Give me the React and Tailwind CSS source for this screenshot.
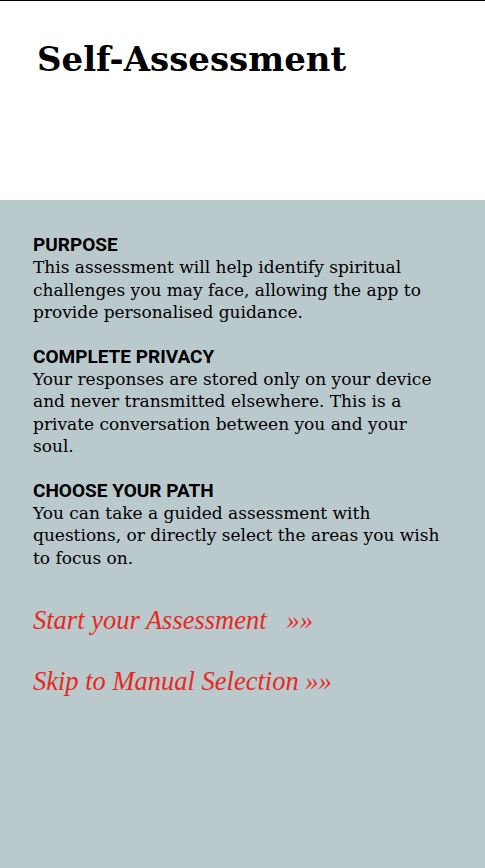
export default function App() {
  return (
    <div className="min-h-[868px] w-full flex flex-col bg-[#bac9cc] border-t border-black">
      <header className="h-[199px] bg-white px-[37px] pt-[34px]">
        <h1 className="text-[34px] font-bold leading-[48px] text-black [font-family:'DejaVu_Serif',serif]">
          Self-Assessment
        </h1>
      </header>
      <main className="px-[33px] pt-[34px] flex flex-col gap-[22px] text-black">
        <section>
          <h2 className="text-[19px] font-bold leading-[22px] [font-family:Roboto,sans-serif]">PURPOSE</h2>
          <p className="text-[17px] leading-[22.5px] [font-family:'DejaVu_Serif',serif]">
            This assessment will help identify spiritual challenges you may face, allowing the app to provide
            personalised guidance.
          </p>
        </section>
        <section>
          <h2 className="text-[19px] font-bold leading-[22px] [font-family:Roboto,sans-serif]">COMPLETE PRIVACY</h2>
          <p className="text-[17px] leading-[22.5px] [font-family:'DejaVu_Serif',serif]">
            Your responses are stored only on your device and never transmitted elsewhere. This is a private
            conversation between you and your soul.
          </p>
        </section>
        <section>
          <h2 className="text-[19px] font-bold leading-[22px] [font-family:Roboto,sans-serif]">CHOOSE YOUR PATH</h2>
          <p className="text-[17px] leading-[22.5px] [font-family:'DejaVu_Serif',serif]">
            You can take a guided assessment with questions, or directly select the areas you wish to focus on.
          </p>
        </section>
        <div className="flex flex-col gap-[30px] pt-[14px] text-[26.5px] italic leading-[31px] text-[#e8281e] [font-family:'Liberation_Serif',serif]">
          <a href="#">Start your Assessment &nbsp;&nbsp;»»</a>
          <a href="#">Skip to Manual Selection »»</a>
        </div>
      </main>
    </div>
  );
}
